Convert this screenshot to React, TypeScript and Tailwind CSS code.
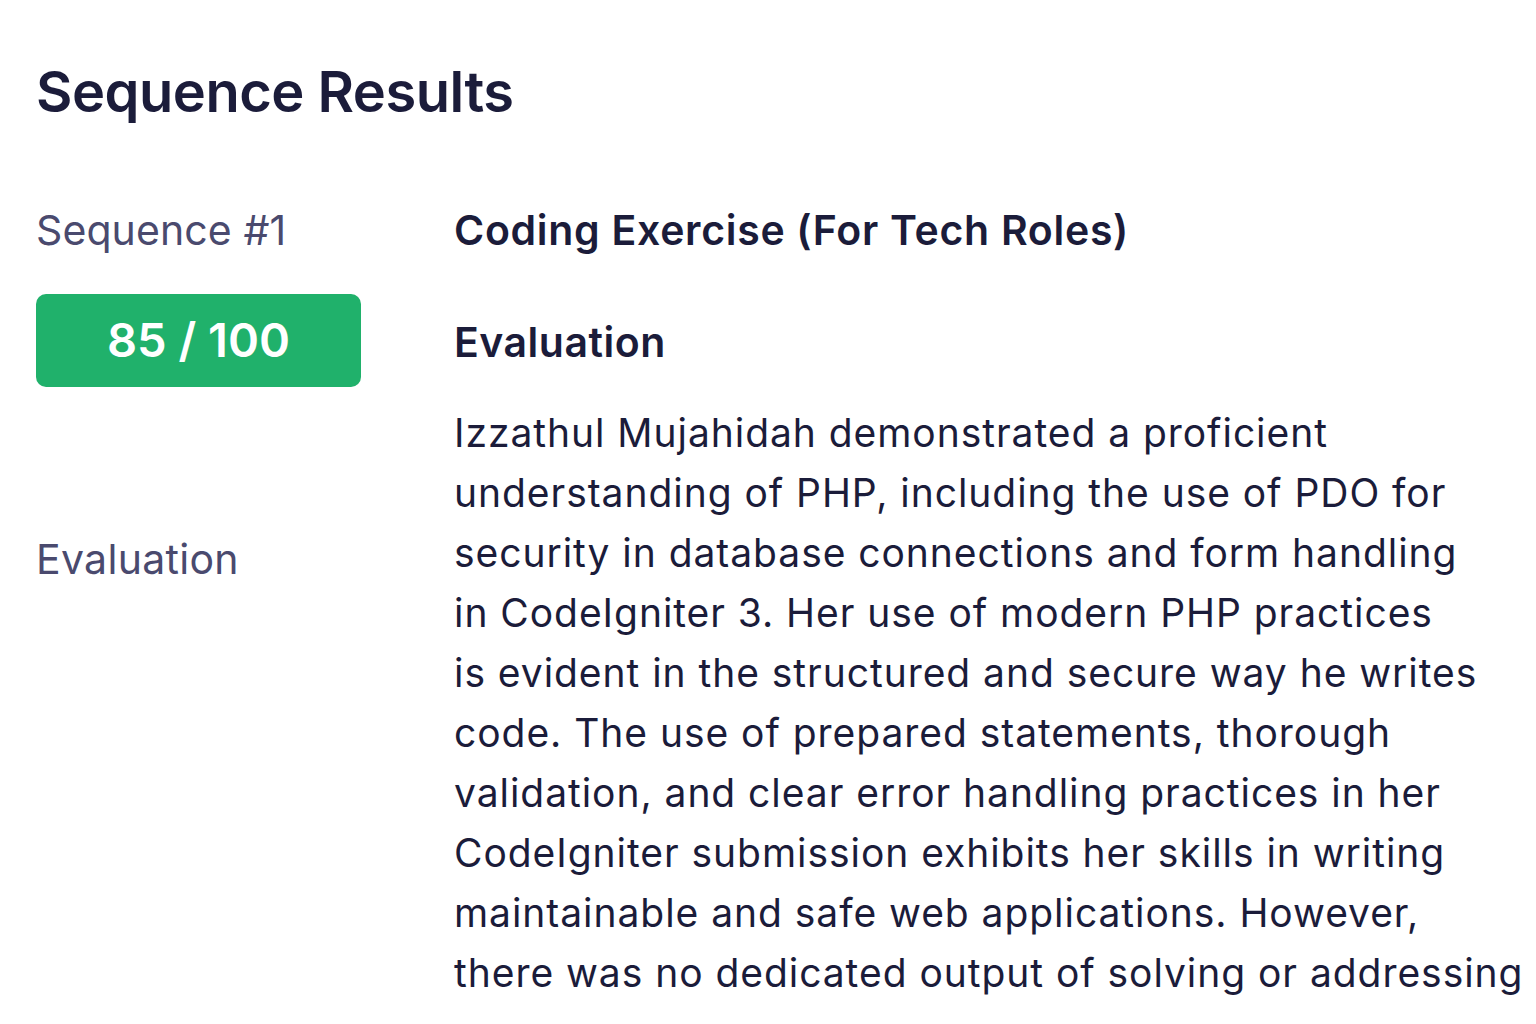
import React from "react";

const lines = [
  "Izzathul Mujahidah demonstrated a proficient",
  "understanding of PHP, including the use of PDO for",
  "security in database connections and form handling",
  "in CodeIgniter 3. Her use of modern PHP practices",
  "is evident in the structured and secure way he writes",
  "code. The use of prepared statements, thorough",
  "validation, and clear error handling practices in her",
  "CodeIgniter submission exhibits her skills in writing",
  "maintainable and safe web applications. However,",
  "there was no dedicated output of solving or addressing",
];

export default function App() {
  return (
    <div
      className="min-h-screen w-full bg-white text-[#1b1c3a] overflow-hidden"
      style={{ fontFamily: "Inter, 'Noto Sans', sans-serif" }}
    >
      <div className="pl-[36px] pt-[58px]">
        <h1 className="text-[56px] leading-[68px] font-semibold tracking-[-0.5px] text-[#1b1c3a]">
          Sequence Results
        </h1>
        <div className="mt-[80px] flex">
          <div className="w-[418px] shrink-0 flex flex-col">
            <div className="text-[41px] leading-[48px] tracking-[0.1px] text-[#4a4a6e]">Sequence #1</div>
            <div className="mt-[40px] w-[325px] h-[93px] rounded-[10px] bg-[#20b16b] flex items-center justify-center text-white text-[47px] font-semibold">
              85 / 100
            </div>
            <div className="mt-[148px] text-[41px] leading-[48px] tracking-[0.3px] text-[#4a4a6e]">Evaluation</div>
          </div>
          <div className="flex flex-col">
            <div className="text-[41px] leading-[48px] tracking-[0.7px] font-semibold text-[#1b1c3a]">
              Coding Exercise (For Tech Roles)
            </div>
            <div className="mt-[64px] text-[41px] leading-[48px] tracking-[0.5px] font-semibold text-[#1b1c3a]">
              Evaluation
            </div>
            <p className="mt-[37px] text-[39px] leading-[60px] tracking-[0.95px] text-[#1b1c3a]">
              {lines.map((l, i) => (
                <span key={i} className="block whitespace-nowrap">
                  {l}
                </span>
              ))}
            </p>
          </div>
        </div>
      </div>
    </div>
  );
}
